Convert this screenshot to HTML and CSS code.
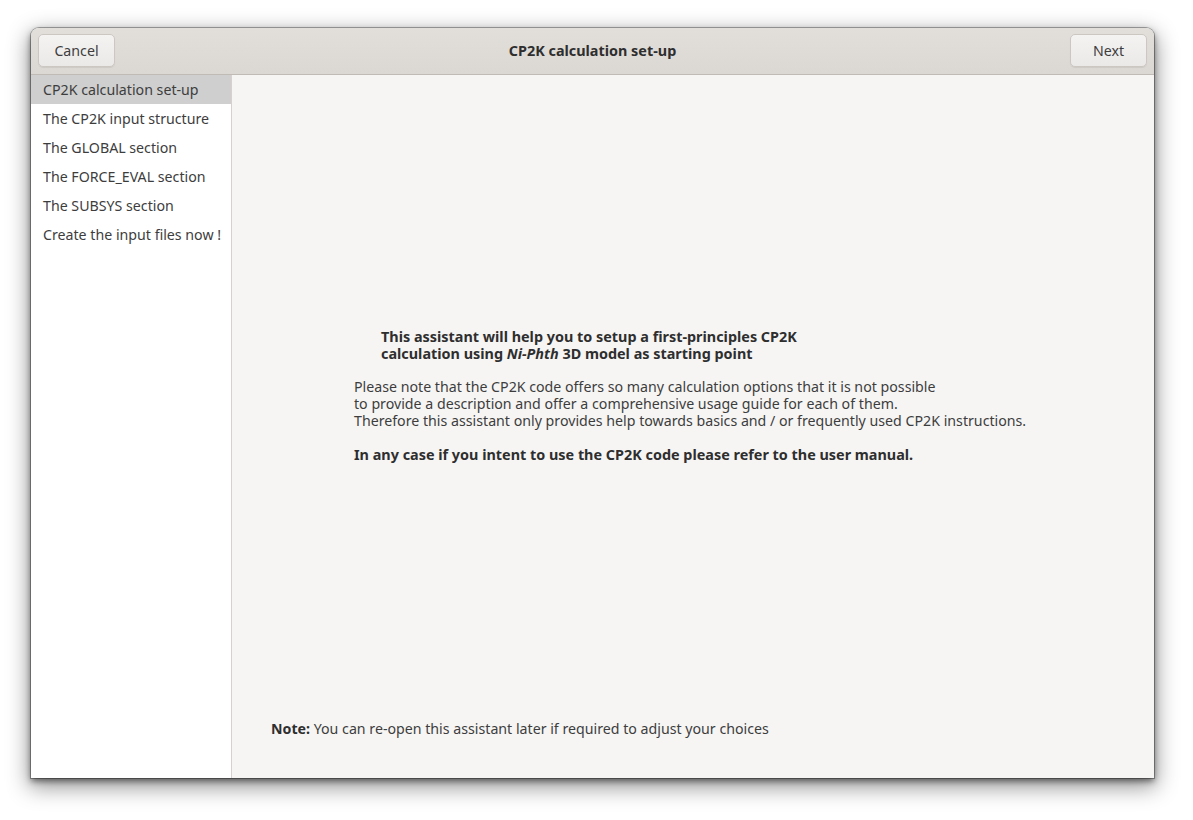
FILE: index.html
```html
<!DOCTYPE html>
<html>
<head>
<meta charset="utf-8">
<link rel="stylesheet" href="styles.css">
</head>
<body>
<div class="window">
  <header class="headerbar">
    <button class="btn">Cancel</button>
    <div class="title">CP2K calculation set-up</div>
    <button class="btn">Next</button>
  </header>
  <div class="main">
    <nav class="sidebar">
      <div class="item selected">CP2K calculation set-up</div>
      <div class="item">The CP2K input structure</div>
      <div class="item">The GLOBAL section</div>
      <div class="item">The FORCE_EVAL section</div>
      <div class="item">The SUBSYS section</div>
      <div class="item">Create the input files now !</div>
    </nav>
    <section class="content">
      <div class="center">
        <div class="intro"><b>This assistant will help you to setup a first-principles CP2K<br>calculation using <i>Ni-Phth</i> 3D model as starting point</b></div>
        <p class="para">Please note that the CP2K code offers so many calculation options that it is not possible<br>to provide a description and offer a comprehensive usage guide for each of them.<br>Therefore this assistant only provides help towards basics and / or frequently used CP2K instructions.</p>
        <p class="para bold">In any case if you intent to use the CP2K code please refer to the user manual.</p>
      </div>
      <div class="note"><b>Note:</b> You can re-open this assistant later if required to adjust your choices</div>
    </section>
  </div>
</div>
</body>
</html>
```
FILE: styles.css
```css
html, body {
  margin: 0;
  padding: 0;
  background: #ffffff;
}
body {
  box-sizing: border-box;
  min-height: 820px;
  padding: 28px 0 0 31px;
  font-family: "Noto Sans", "DejaVu Sans", sans-serif;
  font-size: 14.2px;
  color: #3d3d3d;
}
.window {
  width: 1123px;
  height: 750px;
  display: flex;
  flex-direction: column;
  border-radius: 8px 8px 0 0;
  overflow: hidden;
  box-shadow: 0 0 0 1px rgba(0,0,0,0.3), 0 3px 6px rgba(0,0,0,0.5), 0 7px 22px 2px rgba(0,0,0,0.42);
  background: #f6f5f4;
}
.headerbar {
  height: 47px;
  flex: none;
  box-sizing: border-box;
  display: flex;
  align-items: center;
  justify-content: space-between;
  padding: 0 7px 1px;
  background: linear-gradient(#e2dfdb, #dbd7d3);
  border-bottom: 1px solid #c0bbb5;
}
.btn {
  width: 77px;
  height: 33px;
  font: inherit;
  color: #3d3d3d;
  background: linear-gradient(#f4f3f2, #ebe9e7);
  border: 1px solid #cdc7c2;
  border-radius: 5px;
  box-shadow: 0 1px 1px rgba(0,0,0,0.07);
  padding: 0;
}
.title {
  font-weight: bold;
  font-size: 14.4px;
  color: #2e2e2e;
}
.main {
  flex: 1;
  display: flex;
  min-height: 0;
}
.sidebar {
  width: 200px;
  flex: none;
  background: #ffffff;
  border-right: 1px solid #d6d1cd;
}
.item {
  height: 29px;
  line-height: 29px;
  padding-left: 12px;
  white-space: nowrap;
}
.item.selected {
  background: #cfcfcf;
}
.content {
  flex: 1;
  display: flex;
  flex-direction: column;
  padding: 0 0 0 39px;
}
.center {
  margin-top: 253px;
  padding-left: 83px;
  line-height: 17px;
}
.intro {
  padding-left: 27px;
  font-size: 14.4px;
  color: #2e2e2e;
}
.para {
  margin: 16px 0 0 0;
}
.para.bold {
  margin-top: 17px;
  font-size: 14.4px;
  font-weight: bold;
  color: #2e2e2e;
}
.note {
  margin-top: auto;
  margin-bottom: 41px;
  line-height: 17px;
}
.note b {
  color: #2e2e2e;
}
```
